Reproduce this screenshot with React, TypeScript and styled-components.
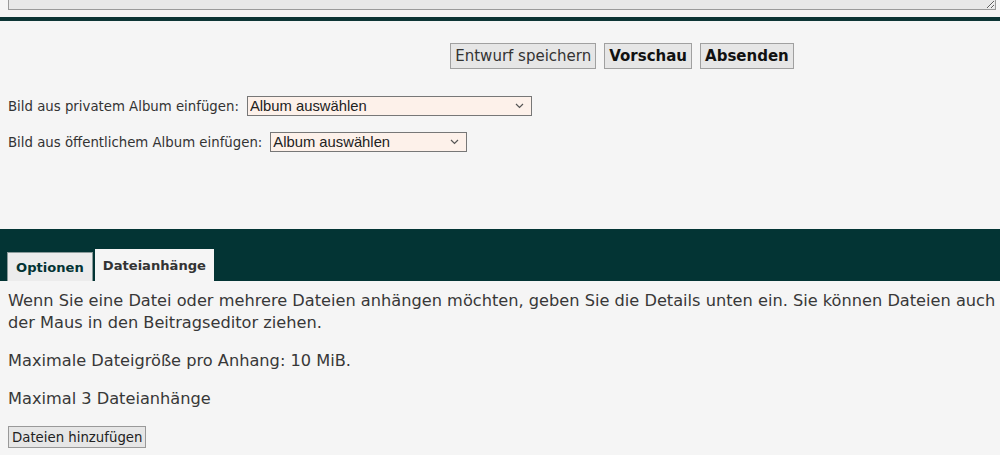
import styled, { createGlobalStyle } from 'styled-components';

const GlobalStyle = createGlobalStyle`
    html, body {
        margin: 0;
        padding: 0;
        background-color: #f5f5f5;
        font-family: 'DejaVu Sans', Verdana, sans-serif;
        color: #333;
        overflow: hidden;
    }
`;

const Chevron = () => (
    <svg width="9" height="6" viewBox="0 0 9 6" fill="none">
        <path d="M1 1l3.5 3.5L8 1" stroke="#555" strokeWidth="1.2" />
    </svg>
);

const App = () => {
    return (
        <>
            <GlobalStyle />
            <Page>
                <EditorClip>
                    <Editor defaultValue="" />
                </EditorClip>
                <Rule />

                <ButtonRow>
                    <FormButton>Entwurf speichern</FormButton>
                    <FormButton bold>Vorschau</FormButton>
                    <FormButton bold>Absenden</FormButton>
                </ButtonRow>

                <AlbumList>
                    <AlbumRow>
                        <Label>Bild aus privatem Album einfügen:</Label>
                        <SelectWrap width={285}>
                            <AlbumSelect>
                                <option>Album auswählen</option>
                            </AlbumSelect>
                            <Arrow>
                                <Chevron />
                            </Arrow>
                        </SelectWrap>
                    </AlbumRow>
                    <AlbumRow>
                        <Label>Bild aus öffentlichem Album einfügen:</Label>
                        <SelectWrap width={197}>
                            <AlbumSelect>
                                <option>Album auswählen</option>
                            </AlbumSelect>
                            <Arrow>
                                <Chevron />
                            </Arrow>
                        </SelectWrap>
                    </AlbumRow>
                </AlbumList>

                <TabBar>
                    <Tab>Optionen</Tab>
                    <Tab active>Dateianhänge</Tab>
                </TabBar>

                <Panel>
                    <Text>
                        Wenn Sie eine Datei oder mehrere Dateien anhängen möchten, geben Sie die Details unten ein. Sie
                        können Dateien auch per Drag &amp; Drop mit der Maus in den Beitragseditor ziehen.
                    </Text>
                    <Text>Maximale Dateigröße pro Anhang: 10 MiB.</Text>
                    <Text>Maximal 3 Dateianhänge</Text>
                    <AddButton>Dateien hinzufügen</AddButton>
                </Panel>
            </Page>
        </>
    );
};

export default App;

const Page = styled.div`
    display: flex;
    flex-direction: column;
    width: 1244px;
    height: 455px;
    overflow: hidden;
`;

const EditorClip = styled.div`
    display: flex;
    flex-direction: column;
    justify-content: flex-end;
    height: 10px;
    overflow: hidden;
    padding-left: 8px;
`;

const Editor = styled.textarea`
    flex: none;
    height: 200px;
    width: 988px;
    box-sizing: border-box;
    background-color: #e8e8e8;
    border: 1px solid #9a9a9a;
    resize: both;
`;

const Rule = styled.div`
    margin-top: 7px;
    height: 4px;
    background-color: #0d3535;
`;

const ButtonRow = styled.div`
    display: flex;
    justify-content: center;
    gap: 8px;
    margin-top: 22px;
`;

const FormButton = styled.button<{ bold?: boolean }>`
    height: 26px;
    padding: 0 4px;
    font-family: 'DejaVu Sans', Verdana, sans-serif;
    font-size: 15px;
    font-weight: ${({ bold }) => (bold ? 'bold' : 'normal')};
    color: ${({ bold }) => (bold ? '#111' : '#333')};
    background-color: #e6e6e6;
    border: 1px solid #a0a0a0;
    border-radius: 0;
`;

const AlbumList = styled.div`
    display: flex;
    flex-direction: column;
    gap: 16px;
    padding-left: 8px;
    margin-top: 27px;
`;

const AlbumRow = styled.div`
    display: flex;
    align-items: center;
    gap: 8px;
`;

const Label = styled.span`
    font-size: 13.3px;
    color: #333;
`;

const SelectWrap = styled.div<{ width: number }>`
    position: relative;
    width: ${({ width }) => width}px;
    height: 20px;
`;

const AlbumSelect = styled.select`
    appearance: none;
    width: 100%;
    height: 100%;
    box-sizing: border-box;
    font-family: 'Liberation Sans', Arial, sans-serif;
    font-size: 14.8px;
    color: #222;
    background-color: #fdf1ea;
    border: 1px solid #777;
    border-radius: 0;
    padding: 0 2px;
    margin: 0;
`;

const Arrow = styled.span`
    position: absolute;
    right: 8px;
    top: 7px;
    display: flex;
    pointer-events: none;
`;

const TabBar = styled.div`
    display: flex;
    align-items: flex-end;
    gap: 2px;
    height: 52px;
    padding-left: 7px;
    margin-top: 77px;
    background-color: #033434;
`;

const Tab = styled.div<{ active?: boolean }>`
    display: flex;
    align-items: center;
    box-sizing: border-box;
    height: ${({ active }) => (active ? '32px' : '29px')};
    padding: 0 8px;
    font-size: 13.1px;
    font-weight: bold;
    color: ${({ active }) => (active ? '#333' : '#033434')};
    background-color: ${({ active }) => (active ? '#f5f5f5' : '#ececec')};
    border: ${({ active }) => (active ? 'none' : '1px solid #8a9a9a')};
    border-bottom: none;
`;

const Panel = styled.div`
    display: flex;
    flex-direction: column;
    align-items: flex-start;
    padding: 9px 8px 0;
`;

const Text = styled.p`
    max-width: 1175px;
    margin: 0 0 16px;
    font-size: 16.2px;
    line-height: 22px;
    color: #383838;
`;

const AddButton = styled.button`
    height: 22px;
    padding: 0 3px;
    font-family: 'DejaVu Sans', Verdana, sans-serif;
    font-size: 13.3px;
    color: #222;
    background-color: #e6e6e6;
    border: 1px solid #999;
    border-radius: 0;
`;
